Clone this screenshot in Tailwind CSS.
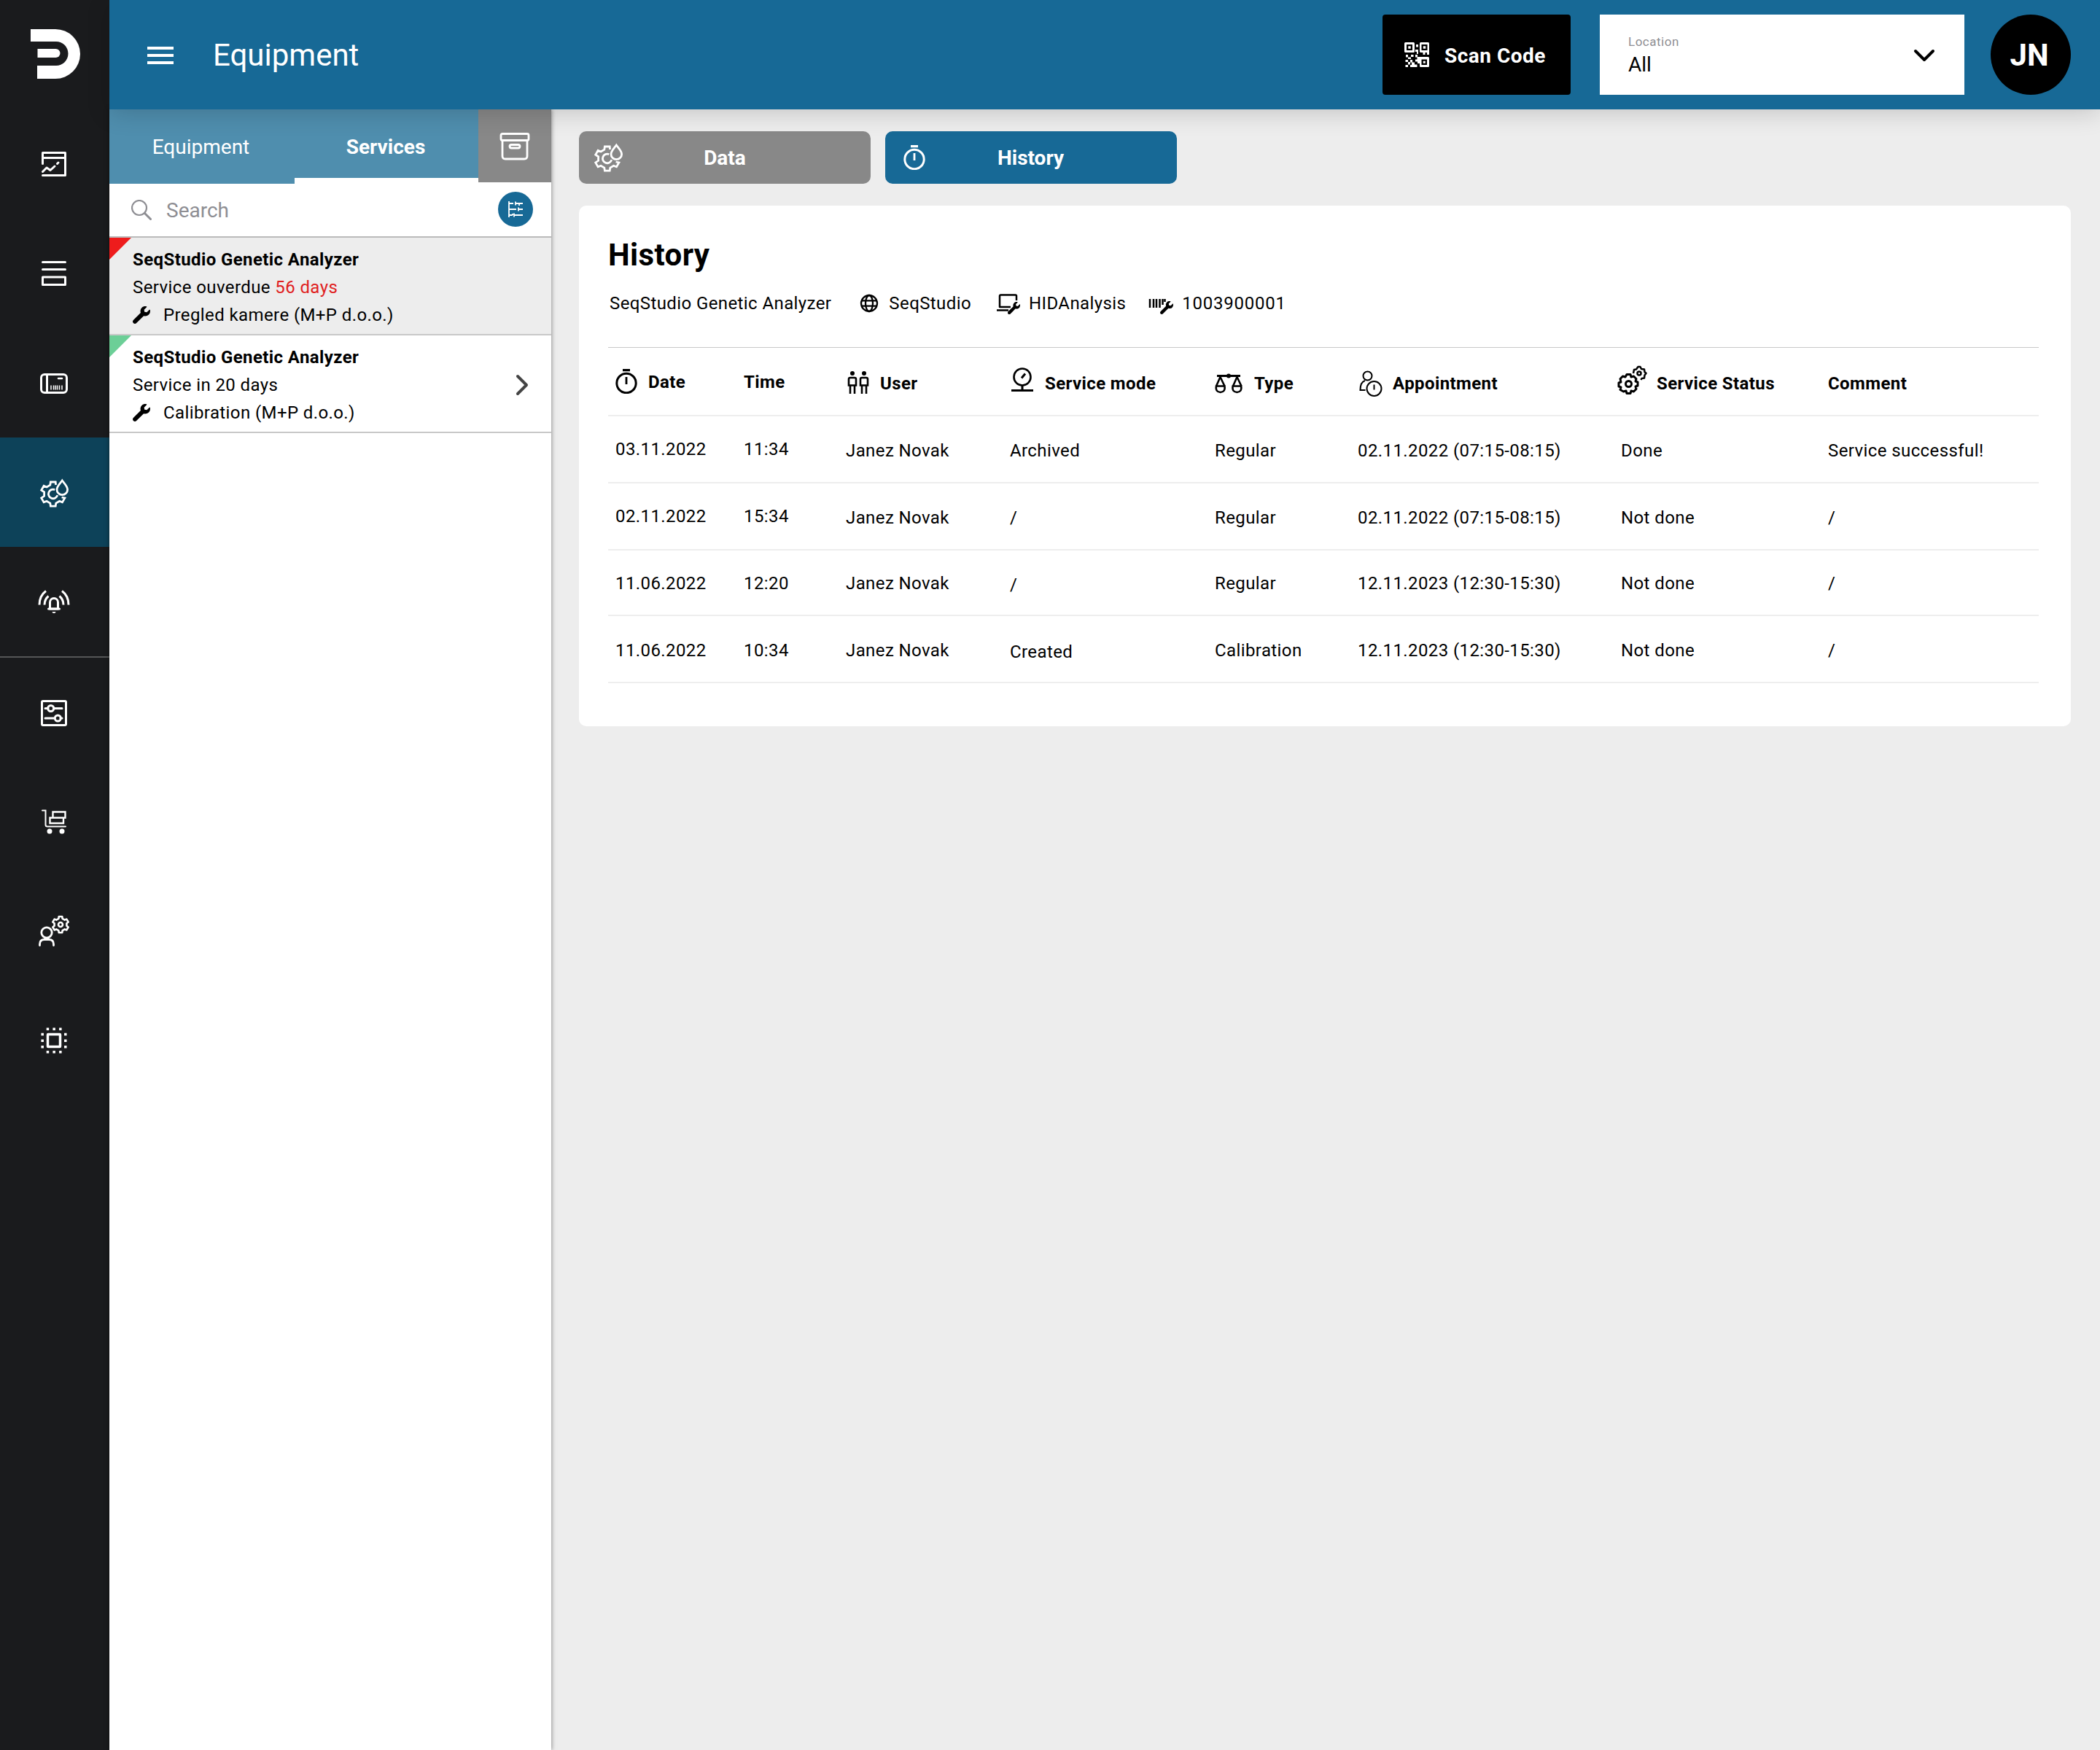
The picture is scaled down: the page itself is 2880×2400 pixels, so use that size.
<!DOCTYPE html>
<html lang="en">
<head>
<meta charset="utf-8">
<title>Equipment</title>
<script src="https://cdn.jsdelivr.net/npm/@tailwindcss/browser@4"></script>
</head>
<body class="flex h-[2400px] w-[2880px] overflow-hidden bg-[#ededed] font-['Roboto',sans-serif] text-black">

<svg class="hidden">
  <symbol id="wrench" viewBox="0 0 512 512"><path fill="currentColor" d="M507.73 109.1c-2.24-9.03-13.54-12.09-20.12-5.51l-74.36 74.36-67.88-11.31-11.31-67.88 74.36-74.36c6.62-6.62 3.43-17.9-5.66-20.16-47.38-11.74-99.55.91-136.58 37.93-39.64 39.64-50.55 97.1-34.05 147.2L18.74 402.76c-24.99 24.99-24.99 65.51 0 90.5 24.99 24.99 65.51 24.99 90.5 0l213.21-213.21c50.12 16.71 107.47 5.68 147.37-34.22 37.07-37.07 49.7-89.32 37.91-136.73z"/></symbol>
  <symbol id="gear-drop" viewBox="0 0 40 40">
    <g fill="none" stroke="currentColor" stroke-width="2.8" stroke-linejoin="miter">
      <path transform="translate(17.8 21.6)" d="M3.8-12.6L3.4-16.6H-3.4L-4-12.4L-8.74-9.66L-12.68-11.24L-16.08-5.36L-12.2-2.74V2.74L-16.08 5.36L-12.68 11.24L-8.74 9.66L-4 12.4L-3.4 16.6H3.4L4 12.4L8.74 9.66L12.68 11.24L16.08 5.36L11.8 4.4"/>
      <path d="M20.2 15.6A6.3 6.3 0 1 0 23.8 23.2"/>
      <path d="M30.3 3C27.5 7 23 11 23 15.4a7.3 7.3 0 0 0 14.6 0C37.6 11 33.1 7 30.3 3z"/>
    </g>
  </symbol>
  <symbol id="stopwatch" viewBox="0 0 30 34"><path fill="currentColor" d="M10 0h10v3.2H10zM13.6 11h2.8v10h-2.8z"/><circle cx="15" cy="19.5" r="13.2" fill="none" stroke="currentColor" stroke-width="3"/></symbol>
</svg>

<aside class="flex w-[150px] shrink-0 flex-col bg-[#1a1b1d] text-white">
  <div class="flex h-[150px] pl-[42px] pt-[40px]">
    <svg class="size-[68px]" viewBox="0 0 68 68" fill="currentColor"><path d="M0 0h34a34 34 0 0 1 0 68H9V50h26a16.5 16.5 0 0 0 0-33H0z"/><path d="M9.5 27h25a6 6 0 0 1 0 12h-25z"/></svg>
  </div>
  <div class="flex h-[150px] items-center justify-center pr-[2px]">
    <svg class="size-[36px]" viewBox="0 0 36 36" fill="none" stroke="currentColor" stroke-width="3" stroke-linecap="round" stroke-linejoin="round"><path d="M2.5 17.5v-15h31v31h-31M2.5 9.5h31M2.5 28.5l5.5-5.5 5 3.5 6-5.500M22.5 17.500l1.500-1.500"/></svg>
  </div>
  <div class="flex h-[150px] items-center justify-center pr-[2px]">
    <svg class="size-[36px]" viewBox="0 0 36 36" fill="none" stroke="currentColor" stroke-width="3" stroke-linecap="round" stroke-linejoin="round"><path d="M2.5 2.5h31M2.5 12.5h31M2.5 23h31v10.5h-31z"/></svg>
  </div>
  <div class="flex h-[150px] items-center justify-center pr-[2px] pt-[2px]">
    <svg class="h-[28px] w-[38px]" viewBox="0 0 38 28" fill="none" stroke="currentColor" stroke-width="3"><rect x="1.5" y="1.5" width="35" height="25" rx="4.5"/><path d="M9.5 2v24"/><path d="M25 7h5" stroke-linecap="round" stroke-width="2.5"/><path d="M15 16.5v6M18.500 16.500v6M21 16.500v6M23.500 16.500v6M26.500 16.500v6M30 16.500v6" stroke-width="1.5"/></svg>
  </div>
  <div class="flex h-[150px] items-center justify-center bg-[#0d4259] pt-[2px]">
    <svg class="size-[40px]"><use href="#gear-drop"/></svg>
  </div>
  <div class="flex h-[152px] items-center justify-center border-b-2 border-[#555657] pr-[2px]">
    <svg class="h-[32px] w-[44px]" viewBox="0 0 44 32" fill="none" stroke="currentColor" stroke-width="3"><path d="M2 20.5C2 12 5.5 5.5 11 1.5M42 20.5C42 12 38.500 5.500 33 1.500M9 20.500C9 15 10.800 11.500 14.500 8.500M35 20.500C35 15 33.200 11.500 29.500 8.500"/><path d="M16.500 25.500V17a5.500 5.500 0 0 1 11 0v8.500M15.500 26h13" stroke-linejoin="round"/><path d="M14.500 26h15" stroke-linecap="round"/><path d="M19.500 30h5a2.500 2 0 0 1-5 0z" fill="currentColor" stroke="none"/></svg>
  </div>
  <div class="flex h-[150px] items-center justify-center pr-[2px] pt-[2px]">
    <svg class="size-[36px]" viewBox="0 0 36 36" fill="none" stroke="currentColor" stroke-width="3"><rect x="1.5" y="1.5" width="33" height="33" rx="1.5"/><g stroke-linecap="round"><path d="M6 11.500h4M18 11.500h11M6 25h12M27 25h2"/></g><circle cx="13.7" cy="11.5" r="4"/><circle cx="23.3" cy="25" r="4"/></svg>
  </div>
  <div class="flex h-[150px] items-center justify-center pr-[2px]">
    <svg class="h-[34px] w-[34px]" viewBox="0 0 34 34" fill="none" stroke="currentColor"><path d="M1 1.500h4.500v19.500q0 2.500 2.500 2.500h25" stroke-width="2" stroke-linecap="round"/><path d="M15.500 3.500h17v8h-17zM11.500 11.500h18.500v7.500H11.500z" stroke-width="2.4"/><circle cx="11" cy="30" r="3.5" fill="currentColor" stroke="none"/><circle cx="28" cy="30" r="3.5" fill="currentColor" stroke="none"/></svg>
  </div>
  <div class="flex h-[150px] items-center justify-center pr-[2px]">
    <svg class="size-[44px]" viewBox="0 0 44 44" fill="none" stroke="currentColor" stroke-width="2.8"><circle cx="12" cy="24" r="7.2"/><path d="M2.500 41.500v-1.500q0-6.500 6.500-6.500h6q6.500 0 6.500 6.500v1.500" stroke-linecap="round"/><g transform="translate(31 13) scale(.66)" stroke-width="4"><path stroke-linejoin="round" d="M4-12.4L3.4-16.6H-3.4L-4-12.4L-8.74-9.66L-12.68-11.24L-16.08-5.36L-12.74-2.74V2.74L-16.08 5.36L-12.68 11.24L-8.74 9.66L-4 12.4L-3.4 16.6H3.4L4 12.4L8.74 9.66L12.68 11.24L16.08 5.36L12.74 2.74V-2.74L16.08-5.36L12.68-11.24L8.74-9.66z"/><circle r="4.5"/></g></svg>
  </div>
  <div class="flex h-[150px] items-center justify-center pr-[2px]">
    <svg class="size-[36px]" viewBox="0 0 36 36" fill="none" stroke="currentColor" stroke-width="3.5"><rect x="9.5" y="9.5" width="17" height="17" rx=".5"/><path stroke-dasharray="3.5 5.2" d="M7.700 2.200h21M7.700 33.800h21M2.200 7.700v21M33.800 7.700v21"/></svg>
  </div>
</aside>

<div class="flex min-w-0 grow flex-col">
  <header class="relative z-10 flex h-[150px] shrink-0 items-center bg-[#176996] pr-[40px] text-white shadow-[0_6px_30px_rgba(0,0,0,0.16)]">
    <div class="ml-[52px] flex w-[36px] flex-col gap-[6px] pt-[2px]"><i class="h-[4px] bg-white"></i><i class="h-[4px] bg-white"></i><i class="h-[4px] bg-white"></i></div>
    <h1 class="ml-[54px] grow pt-[2px] text-[42px] leading-none">Equipment</h1>
    <button class="flex h-[110px] w-[258px] items-center rounded-[4px] bg-black pl-[30px]">
      <svg class="size-[34px]" viewBox="0 0 34 34" fill="currentColor"><path fill-rule="evenodd" d="M1.5 0h11q1.5 0 1.5 1.5v11q0 1.5-1.5 1.5h-11Q0 14 0 12.5v-11Q0 0 1.5 0zM3 3v8h8V3zM5.3 5.3h3.400v3.400H5.300zM22.500 0h10Q34 0 34 1.500V17h-3v-3h-2.500v3h-3v-3h-3Q21 14 21 12.500v-11Q21 0 22.500 0zM23.500 3v8h8V3zM25.800 5.300h3.400v3.400h-3.400zM22.500 20h10q1.500 0 1.500 1.500v11q0 1.500-1.500 1.500h-10Q21 34 21 32.500V29h-3v-2.500h-3v-3h2.500v-3H15V17h3v3h4.500zM23.500 23.500v7.500h7.500v-7.500zM25.800 25.800h3v3h-3z"/><path d="M16 3h3v3.500h-3zM17 10h2v6h-2zM15 10h3v3h-3zM2 17h3v3.500h4V17h3.500v3H9v3H5v-2.500H2zM1.500 24h3.500v3H1.500zM5 27h3v3.500H5zM1.500 31H5v3H1.500zM8 24h3v3.500h3v3h3.500V34H8v-3h2v-3.500H8z"/></svg>
      <span class="ml-[21px] pt-[4px] text-[28px] font-bold leading-none tracking-[0.5px]">Scan Code</span>
    </button>
    <div class="ml-[40px] flex h-[110px] w-[500px] items-center justify-between bg-white pl-[39px] pr-[40px] text-black">
      <div class="flex flex-col pt-[4px]">
        <span class="text-[17px] leading-[24px] tracking-[0.5px] text-[#8e8e93]">Location</span>
        <span class="text-[28px] leading-[40px]">All</span>
      </div>
      <svg class="mt-[2px] h-[20px] w-[30px]" viewBox="0 0 30 20" fill="none" stroke="currentColor" stroke-width="4" stroke-linecap="round" stroke-linejoin="round"><path d="M3 4l12 12L27 4"/></svg>
    </div>
    <div class="ml-[36px] flex size-[110px] items-center justify-center rounded-full bg-black pr-[4px] pt-[2px] text-[42px] font-bold leading-none">JN</div>
  </header>

  <div class="flex min-h-0 grow">
    <section class="relative flex w-[606px] shrink-0 flex-col bg-white shadow-[0_0_6px_rgba(0,0,0,0.5)]">
      <div class="flex h-[102px] text-[28px] text-white">
        <div class="flex w-[254px] items-center justify-center bg-[#4f8eae] pr-[3px] pt-[2px]">Equipment</div>
        <div class="flex w-[252px] items-center justify-center border-b-[8px] border-white bg-[#4f8eae] pr-[2px] pt-[10px] font-bold">Services</div>
        <div class="flex h-[100px] w-[100px] items-center justify-center bg-[#888888] pt-[2px]">
          <svg class="h-[38px] w-[42px]" viewBox="0 0 42 38" fill="none" stroke="currentColor" stroke-width="2.8" stroke-linejoin="round"><rect x="2" y="1.5" width="38" height="9" rx="2"/><path d="M4 10.500V32q0 4 4 4h26q4 0 4-4V10.500"/><rect x="14" y="16.500" width="14" height="4.500" rx="2.200"/></svg>
        </div>
      </div>
      <div class="flex h-[74px] items-center border-b-2 border-[#bbbbbb] pl-[30px] pr-[25px]">
        <svg class="size-[28px]" viewBox="0 0 28 28" fill="none" stroke="#8e8e93" stroke-linecap="round"><circle cx="11" cy="11" r="10" stroke-width="2.2"/><path d="M18.500 18.500l8 8" stroke-width="3"/></svg>
        <span class="ml-[20px] grow pt-[2px] text-[28px] text-[#8e8e93]">Search</span>
        <div class="-mt-[2px] flex size-[48px] items-center justify-center rounded-full bg-[#176996] text-white">
          <svg class="h-[22px] w-[20px]" viewBox="0 0 20 22" fill="none" stroke="currentColor" stroke-width="1.8"><path d="M1 0v22M1 3h6M10 3h10M10 .5v5M15 3v3M1 11h10M14 11h6M14 8.500v5M1 19h5M8 19h12M8 16.500v5M6 19v-2"/></svg>
        </div>
      </div>
      <div class="relative flex h-[134px] flex-col border-b-2 border-[#c8c8c8] bg-[#ededed] pl-[32px] pt-[11px] text-[24px] leading-[38px] tracking-[0.4px]">
        <svg class="absolute left-0 top-0 size-[30px]" viewBox="0 0 30 30"><path d="M0 0h30L0 30z" fill="#ee1c1c"/></svg>
        <b>SeqStudio Genetic Analyzer</b>
        <span>Service ouverdue <span class="text-[#e02020]">56 days</span></span>
        <span class="flex items-center"><svg class="mr-[18px] size-[24px]"><use href="#wrench"/></svg>Pregled kamere (M+P d.o.o.)</span>
      </div>
      <div class="relative flex h-[134px] flex-col border-b-2 border-[#c8c8c8] pl-[32px] pt-[11px] text-[24px] leading-[38px] tracking-[0.4px]">
        <svg class="absolute left-0 top-0 size-[30px]" viewBox="0 0 30 30"><path d="M0 0h30L0 30z" fill="#6ccf97"/></svg>
        <b>SeqStudio Genetic Analyzer</b>
        <span>Service in 20 days</span>
        <span class="flex items-center"><svg class="mr-[18px] size-[24px]"><use href="#wrench"/></svg>Calibration (M+P d.o.o.)</span>
        <svg class="absolute right-[30px] top-[52px] h-[32px] w-[20px]" viewBox="0 0 20 32" fill="none" stroke="#444" stroke-width="4" stroke-linecap="round" stroke-linejoin="round"><path d="M4 4l12 12L4 28"/></svg>
      </div>
    </section>

    <main class="flex grow flex-col pl-[38px] pr-[40px] pt-[30px]">
      <div class="flex gap-[20px] text-[28px] font-bold text-white">
        <button class="flex h-[72px] w-[400px] items-center rounded-[10px] bg-[#888888] pl-[21px]"><svg class="size-[40px]"><use href="#gear-drop"/></svg><span class="-ml-[61px] grow pt-[2px] text-center">Data</span></button>
        <button class="flex h-[72px] w-[400px] items-center rounded-[10px] bg-[#176996] pl-[25px]"><svg class="h-[34px] w-[30px]"><use href="#stopwatch"/></svg><span class="-ml-[56px] grow pt-[2px] text-center">History</span></button>
      </div>

      <div class="mt-[30px] flex h-[714px] flex-col rounded-[10px] bg-white pl-[40px] pr-[44px] pt-[44px]">
        <h2 class="text-[42px] font-bold leading-[48px] tracking-[0.4px]">History</h2>
        <div class="mt-[22px] flex h-[40px] items-center pl-[2px] text-[24px] tracking-[0.4px]">
          <span>SeqStudio Genetic Analyzer</span>
          <svg class="ml-[39px] size-[26px]" viewBox="0 0 26 26" fill="none" stroke="currentColor" stroke-width="2.3"><circle cx="13" cy="13" r="11"/><ellipse cx="13" cy="13" rx="5" ry="11"/><path d="M2.500 9.300h21M2.500 16.700h21"/></svg>
          <span class="ml-[14px]">SeqStudio</span>
          <svg class="ml-[34px] mt-[2px] h-[28px] w-[34px]" viewBox="0 0 34 28" fill="none" stroke="currentColor" stroke-width="2.5"><path d="M20 18H5V3q0-1.500 1.500-1.500h20Q28 1.500 28 3v6M1 22.500h16" stroke-linejoin="round"/><svg x="16" y="11" width="17" height="17"><use href="#wrench"/></svg></svg>
          <span class="ml-[11px]">HIDAnalysis</span>
          <svg class="ml-[31px] mt-[6px] h-[24px] w-[34px]" viewBox="0 0 34 24" fill="none" stroke="currentColor" stroke-width="2.5"><path d="M2 3v12M7 3v12M11 3v12M15.500 3v12M19.500 3v8M22.500 3v4"/><svg x="16" y="6" width="18" height="18"><use href="#wrench"/></svg></svg>
          <span class="ml-[12px] tracking-[0.75px]">1003900001</span>
        </div>

        <div class="mt-[40px] text-[24px] tracking-[0.4px]">
          <div class="grid h-[95px] grid-cols-[176px_140px_225px_281px_196px_361px_284px_1fr] items-center border-b-2 border-t border-b-[#eeeeee] border-t-[#c8c8c8] pl-[10px] pt-[2px] font-bold">
            <div class="flex items-center"><svg class="-mt-[2px] mr-[15px] h-[34px] w-[30px]"><use href="#stopwatch"/></svg>Date</div>
            <div>Time</div>
            <div class="flex items-center pt-[4px]"><svg class="-mt-[2px] ml-[2px] mr-[15px] h-[32px] w-[30px]" viewBox="0 0 30 32" fill="none" stroke="currentColor" stroke-width="2.6"><g id="person"><circle cx="7" cy="3" r="3" fill="currentColor" stroke="none"/><path d="M2 19.500V11q0-2 2-2h6q2 0 2 2v8.500zM4 20v11M10 20v11"/></g><use href="#person" x="16"/></svg>User</div>
            <div class="flex items-center pt-[4px]"><svg class="-mt-[10px] ml-[2px] mr-[16px] h-[34px] w-[30px]" viewBox="0 0 30 34" fill="none" stroke="currentColor" stroke-width="2.6"><circle cx="15" cy="13" r="11.5"/><path d="M14 14.500l5-6M15 25v6M0 31.500h30" stroke-width="3"/></svg>Service mode</div>
            <div class="flex items-center pt-[4px]"><svg class="mr-[16px] h-[28px] w-[38px]" viewBox="0 0 38 28" fill="none" stroke="currentColor" stroke-width="2.6"><path d="M3 3.500h32" stroke-width="3"/><circle cx="19" cy="3.5" r="3" fill="currentColor" stroke="none"/><path d="M7.500 5L2 17.500M7.500 5l6 12.500M30.500 5L25 17.500M30.500 5l6 12.500"/><path d="M2 17.500q-1.500 8 5.700 8.500q7.200-.5 5.700-8.500zM24.700 17.500q-1.500 8 5.700 8.500q7.200-.5 5.700-8.500z"/></svg>Type</div>
            <div class="flex items-center pt-[4px]"><svg class="ml-[2px] mr-[14px] h-[36px] w-[32px]" viewBox="0 0 32 36" fill="none" stroke="currentColor" stroke-width="2"><circle cx="11.5" cy="7.5" r="6"/><path d="M8.500 27H1.500q0-11 6.500-13"/><circle cx="20.5" cy="25" r="10"/><path d="M20.500 19.500v7"/></svg>Appointment</div>
            <div class="flex items-center pt-[4px]"><svg class="-ml-[5px] -mt-[10px] mr-[12px] size-[42px]" viewBox="0 0 42 42" fill="none" stroke="currentColor" stroke-width="3" stroke-linejoin="round"><circle cx="15.5" cy="26.5" r="4"/><path d="M13 13.500h5l1 3.500 3.500-1 3.500 3.500-1 3.500 3 1v5l-3 1 1 3.500-3.500 3.500-3.500-1-1 3.500h-5l-1-3.500-3.500 1L4 34.500 5 31l-3-1v-5l3-1-1-4.500L7.500 16l3.500 1z"/><g stroke-width="2.5"><circle cx="30" cy="12" r="2.5"/><path d="M22 12l1-5 3-.5L28.500 3h3L33 6l4 .5.5 3.500 2 2-2 2.500-.5 4-3.500.5-1 2"/></g></svg>Service Status</div>
            <div class="pt-[4px]">Comment</div>
          </div>
          <div class="grid h-[92px] grid-cols-[176px_140px_225px_281px_196px_361px_284px_1fr] items-center border-b-2 border-[#eeeeee] pl-[10px]">
            <div>03.11.2022</div><div>11:34</div><div class="pt-[4px]">Janez Novak</div><div class="pt-[4px]">Archived</div><div class="pt-[4px]">Regular</div><div class="pt-[4px]">02.11.2022 (07:15-08:15)</div><div class="pt-[4px]">Done</div><div class="pt-[4px]">Service successful!</div>
          </div>
          <div class="grid h-[92px] grid-cols-[176px_140px_225px_281px_196px_361px_284px_1fr] items-center border-b-2 border-[#eeeeee] pl-[10px]">
            <div>02.11.2022</div><div>15:34</div><div class="pt-[4px]">Janez Novak</div><div class="pt-[4px]">/</div><div class="pt-[4px]">Regular</div><div class="pt-[4px]">02.11.2022 (07:15-08:15)</div><div class="pt-[4px]">Not done</div><div class="pt-[4px]">/</div>
          </div>
          <div class="grid h-[90px] grid-cols-[176px_140px_225px_281px_196px_361px_284px_1fr] items-center border-b-2 border-[#eeeeee] pl-[10px] pt-[2px]">
            <div>11.06.2022</div><div>12:20</div><div>Janez Novak</div><div class="pt-[4px]">/</div><div>Regular</div><div>12.11.2023 (12:30-15:30)</div><div>Not done</div><div>/</div>
          </div>
          <div class="grid h-[92px] grid-cols-[176px_140px_225px_281px_196px_361px_284px_1fr] items-center border-b-2 border-[#eeeeee] pl-[10px] pt-[4px]">
            <div>11.06.2022</div><div>10:34</div><div>Janez Novak</div><div class="pt-[4px]">Created</div><div>Calibration</div><div>12.11.2023 (12:30-15:30)</div><div>Not done</div><div>/</div>
          </div>
        </div>
      </div>
    </main>
  </div>
</div>
</body>
</html>
